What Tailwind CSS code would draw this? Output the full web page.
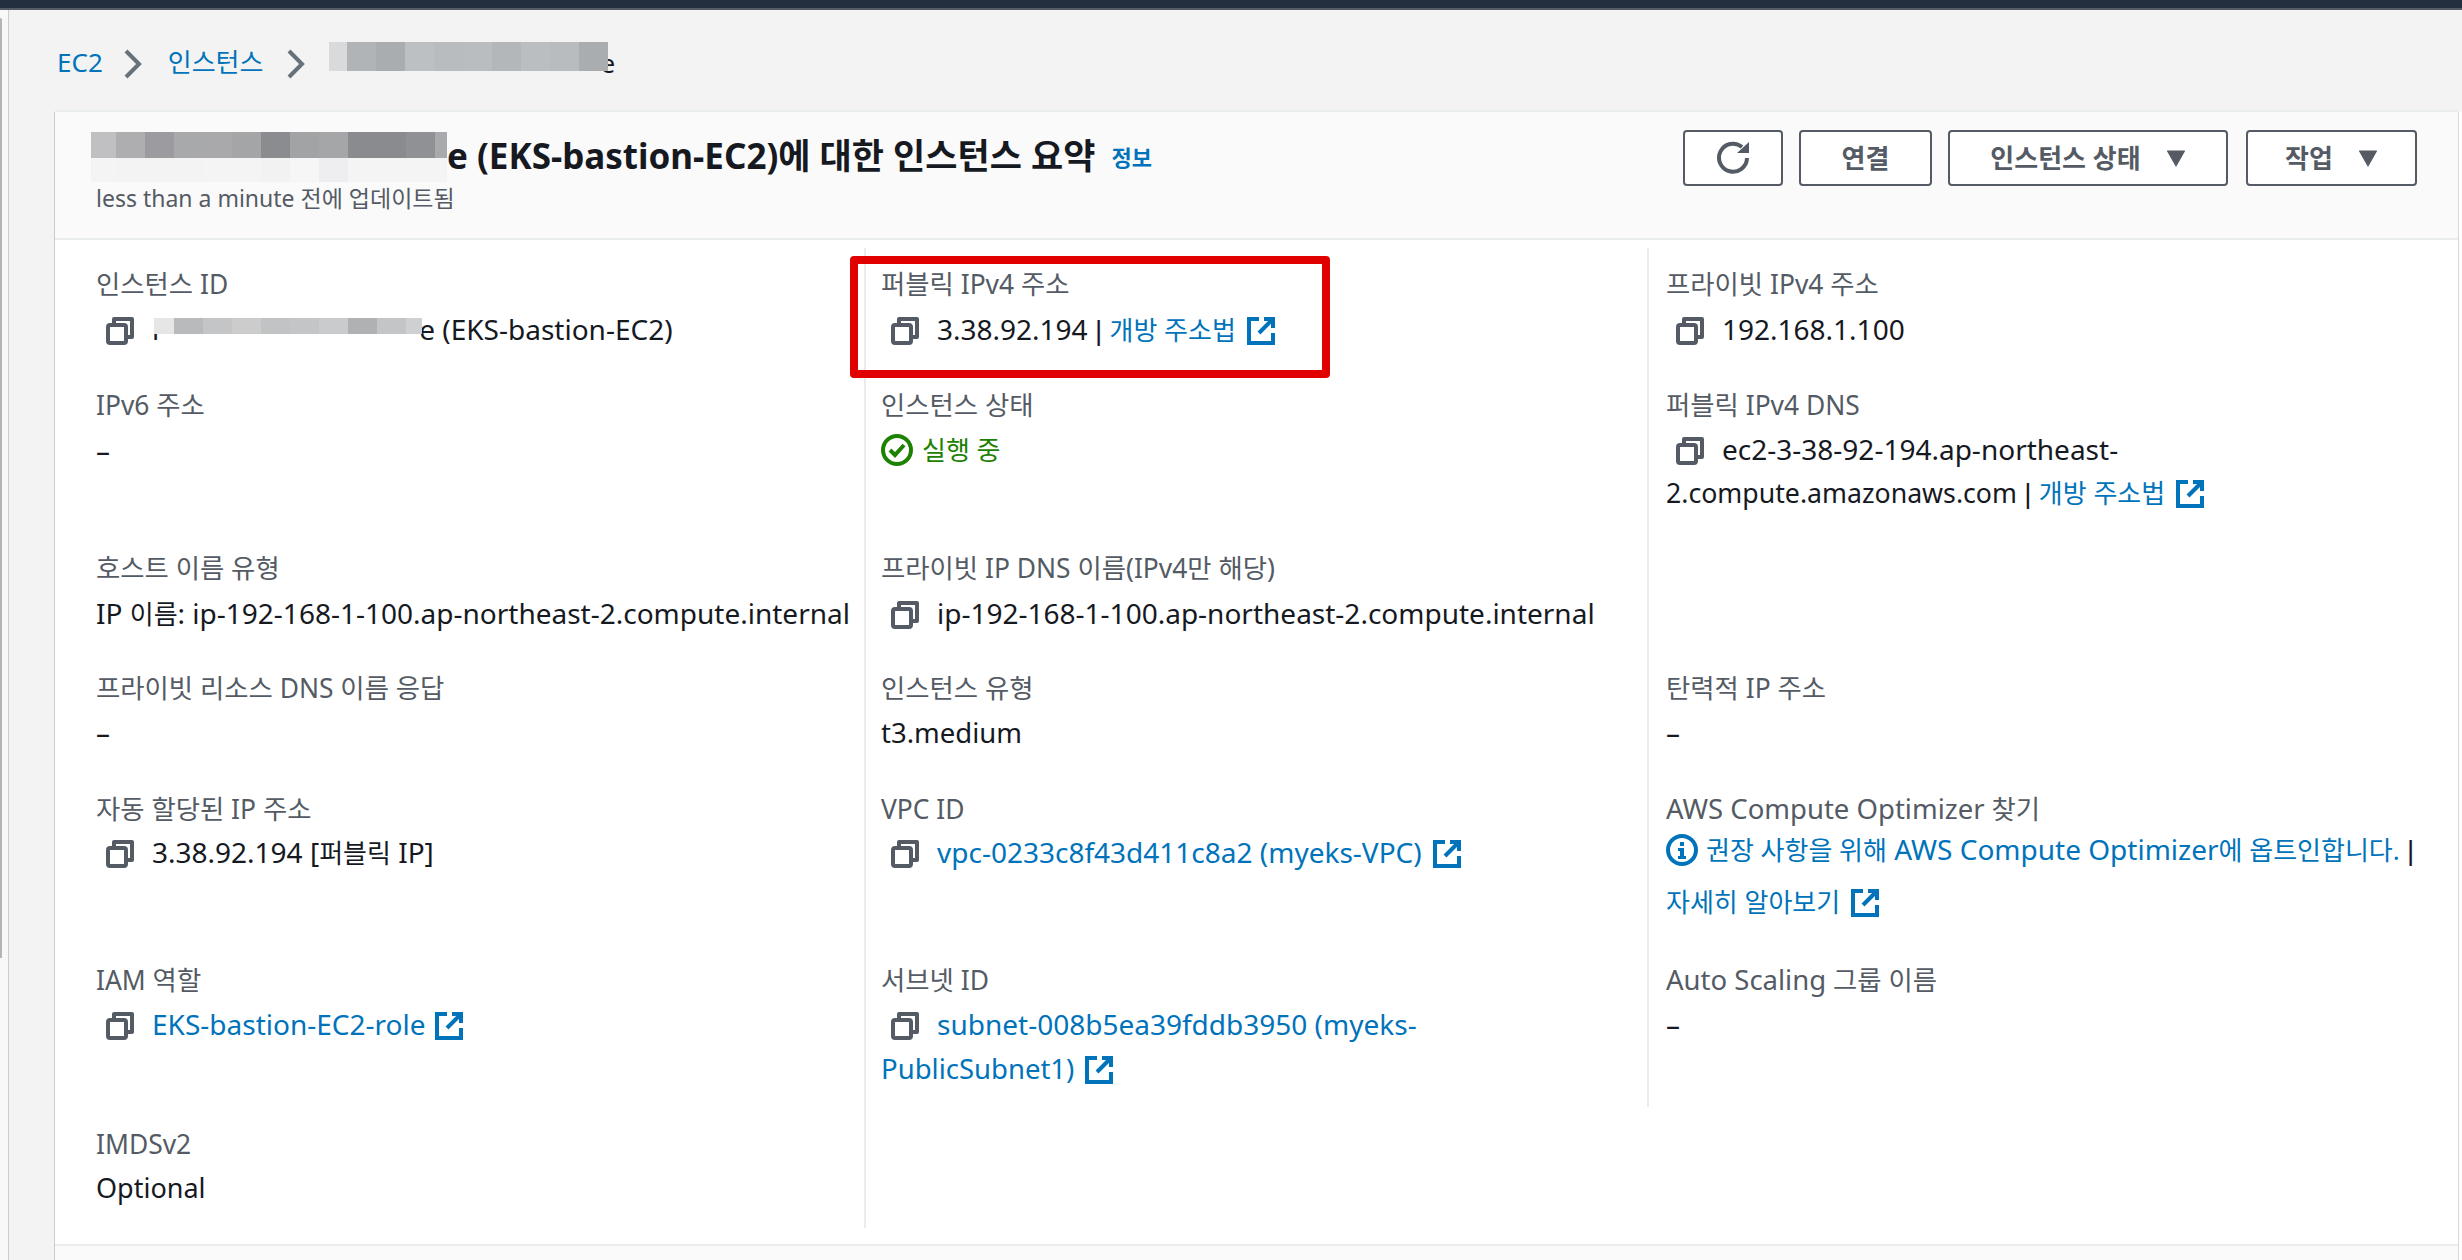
<!DOCTYPE html>
<html lang="ko">
<head>
  <meta charset="UTF-8" />
  <title>인스턴스 요약</title>
  <script src="https://cdn.jsdelivr.net/npm/@tailwindcss/browser@4"></script>
</head>
<body class="h-[1260px] overflow-hidden bg-[#f3f3f3] text-[26px] leading-[44px] text-[#16191f] font-['Noto_Sans','Noto_Sans_CJK_KR',sans-serif]">
  <svg class="hidden">
    <symbol id="copy" viewBox="0 0 28 28"><g fill="none" stroke="#545b64" stroke-width="4" stroke-linejoin="round"><rect x="2" y="8" width="18" height="18" rx="2"/><path d="M8 7V2h18v18h-5"/></g></symbol>
    <symbol id="ext" viewBox="0 0 28 28"><g fill="none" stroke="#0073bb" stroke-width="4"><path d="M12 2H2v24h24V16"/><path d="M17 2h9v9"/><path d="M25.5 2.500 12 16"/></g></symbol>
  </svg>

  <div class="h-[10px] bg-[#232f3e] border-b-2 border-[#545b64]"></div>
  <div class="flex">
    <div class="relative w-[9px] h-[1250px] bg-[#f8f8f8] border-r border-[#cccccc]">
      <div class="absolute left-0 top-[8px] w-[2px] h-[940px] bg-[#b5b5b5] rounded-tr-sm"></div>
    </div>
    <div class="w-[2449px]">
      <nav class="h-[102px] flex items-start pl-[48px] pt-[30px] text-[#0073bb] text-[26px]">
        <span>EC2</span>
        <svg class="w-[18px] h-[30px] ml-[21px] mr-[26px] mt-[9px]" viewBox="0 0 18 30" fill="none" stroke="#687078" stroke-width="4"><path d="M2 2l13 13L2 28"/></svg>
        <span>인스턴스</span>
        <svg class="w-[18px] h-[30px] ml-[24px] mr-[24px] mt-[9px]" viewBox="0 0 18 30" fill="none" stroke="#687078" stroke-width="4"><path d="M2 2l13 13L2 28"/></svg>
        <span class="relative z-10 flex h-[29px] mt-[2px] w-[279px]">
          <i class="w-[18px] bg-[#d8dadb]"></i><i class="w-[29px] bg-[#b0b4b7]"></i><i class="w-[29px] bg-[#a9adb0]"></i><i class="w-[29px] bg-[#bcc0c2]"></i><i class="w-[29px] bg-[#b8bcbe]"></i><i class="w-[29px] bg-[#b9bdbf]"></i><i class="w-[29px] bg-[#b3b7ba]"></i><i class="w-[29px] bg-[#babec0]"></i><i class="w-[29px] bg-[#b8bcbe]"></i><i class="w-[29px] bg-[#a9adb0]"></i>
        </span>
        <span class="text-[#16191f] -ml-[8px] pt-[1px]">e</span>
      </nav>

      <section class="relative ml-[46px] w-[2403px] bg-white h-[1148px] shadow-[-1px_0_0_#c8cccc,1px_0_0_#d5dbdb,0_-2px_0_#eaeded]">
        <header class="h-[128px] bg-[#fafafa] border-b-2 border-[#eaeded] flex justify-between pl-[36px] pr-[41px]">
          <div>
            <div class="flex items-start h-[70px]">
              <div class="w-[356px] mt-[20px]">
                <div class="flex h-[26px]">
                  <i class="w-[25px] bg-[#c0c0c2]"></i><i class="w-[29px] bg-[#aeaeb0]"></i><i class="w-[29px] bg-[#9c9ca0]"></i><i class="w-[29px] bg-[#a8a9ab]"></i><i class="w-[29px] bg-[#a9a9ab]"></i><i class="w-[29px] bg-[#a4a5a7]"></i><i class="w-[29px] bg-[#8b8c90]"></i><i class="w-[29px] bg-[#a2a3a5]"></i><i class="w-[29px] bg-[#a5a6a8]"></i><i class="w-[58px] bg-[#8a8b8f]"></i><i class="w-[29px] bg-[#909195]"></i><i class="w-[12px] bg-[#a9aaac]"></i>
                </div>
                <div class="flex h-[24px]">
                  <i class="w-[25px] bg-[#f4f4f5]"></i><i class="w-[87px] bg-[#f3f3f4]"></i><i class="w-[58px] bg-[#f4f4f5]"></i><i class="w-[29px] bg-[#f2f2f3]"></i><i class="w-[29px] bg-[#f6f6f7]"></i><i class="w-[29px] bg-[#eeeef0]"></i><i class="w-[99px] bg-[#f4f4f5]"></i>
                </div>
              </div>
              <h1 class="font-bold text-[35px] leading-[48px] mt-[20px] whitespace-nowrap">e (EKS-bastion-EC2)에 대한 인스턴스 요약</h1>
              <span class="font-bold ml-[16px] mt-[23px] text-[22px] text-[#0073bb]">정보</span>
            </div>
            <p class="ml-[5px] text-[23px] leading-[32px] text-[#545b64]">less than a minute 전에 업데이트됨</p>
          </div>
          <div class="flex h-[56px] mt-[18px] font-bold text-[26px] text-[#545b64]">
            <button class="w-[100px] border-2 border-[#545b64] rounded-[4px] bg-white flex items-center justify-center">
              <svg class="w-[36px] h-[36px]" viewBox="0 0 36 36" fill="none"><path d="M32 18a14 14 0 1 1-5-11" stroke="#545b64" stroke-width="4"/><path d="M34 2v11H22z" fill="#545b64"/></svg>
            </button>
            <button class="w-[133px] ml-[16px] border-2 border-[#545b64] rounded-[4px] bg-white">연결</button>
            <button class="w-[280px] ml-[16px] border-2 border-[#545b64] rounded-[4px] bg-white flex items-center justify-center gap-[25px]">인스턴스 상태 <svg class="w-[20px] h-[17px]" viewBox="0 0 18 16"><path d="M1 1h16L9 15z" fill="#545b64" stroke="#545b64" stroke-linejoin="round"/></svg></button>
            <button class="w-[171px] ml-[18px] border-2 border-[#545b64] rounded-[4px] bg-white flex items-center justify-center gap-[25px]">작업 <svg class="w-[20px] h-[17px]" viewBox="0 0 18 16"><path d="M1 1h16L9 15z" fill="#545b64" stroke="#545b64" stroke-linejoin="round"/></svg></button>
          </div>
        </header>

        <div class="mt-[8px] grid grid-cols-[809px_783px_1fr] grid-rows-[135px_163px_120px_121px_171px_165px_105px] text-[28px]">
          <!-- row 1 -->
          <div class="pl-[41px] pt-[14px]">
            <div class="text-[26.4px] text-[#545b64]">인스턴스 ID</div>
            <div class="mt-[1px] relative"><svg class="inline-block w-[28px] h-[28px] align-[-5px] ml-[10px] mr-[18px]"><use href="#copy"/></svg><span class="relative">i<span class="absolute left-[2px] top-[8px] flex h-[16px]"><i class="w-[20px] bg-[#e6e6e7]"></i><i class="w-[29px] bg-[#b9babb]"></i><i class="w-[29px] bg-[#c4c5c6]"></i><i class="w-[29px] bg-[#cccccd]"></i><i class="w-[29px] bg-[#c2c3c4]"></i><i class="w-[29px] bg-[#c4c5c6]"></i><i class="w-[29px] bg-[#cacbcc]"></i><i class="w-[29px] bg-[#b0b1b2]"></i><i class="w-[29px] bg-[#c4c5c6]"></i><i class="w-[16px] bg-[#cfd0d1]"></i></span></span><span class="ml-[260px]">e (EKS-bastion-EC2)</span></div>
          </div>
          <div class="border-l-2 border-[#eaeded] pl-[15px] pt-[14px]">
            <div class="text-[26.4px] text-[#545b64]">퍼블릭 IPv4 주소</div>
            <div class="mt-[1px]"><svg class="inline-block w-[28px] h-[28px] align-[-5px] ml-[10px] mr-[18px]"><use href="#copy"/></svg>3.38.92.194 <span class="font-['Liberation_Sans']">|</span> <span class="text-[#0073bb] text-[26px]">개방 주소법</span><svg class="inline-block w-[28px] h-[28px] align-[-5px] ml-[11px]"><use href="#ext"/></svg></div>
          </div>
          <div class="border-l-2 border-[#eaeded] pl-[17px] pt-[14px]">
            <div class="text-[26.4px] text-[#545b64]">프라이빗 IPv4 주소</div>
            <div class="mt-[1px]"><svg class="inline-block w-[28px] h-[28px] align-[-5px] ml-[10px] mr-[18px]"><use href="#copy"/></svg>192.168.1.100</div>
          </div>

          <!-- row 2 -->
          <div class="pl-[41px]">
            <div class="text-[26.4px] text-[#545b64]">IPv6 주소</div>
            <div class="mt-[1px]">–</div>
          </div>
          <div class="border-l-2 border-[#eaeded] pl-[15px]">
            <div class="text-[26.4px] text-[#545b64]">인스턴스 상태</div>
            <div class="mt-[1px] flex items-center gap-[9px] text-[26px] text-[#1d8102]">
              <svg class="w-[32px] h-[32px]" viewBox="0 0 32 32" fill="none" stroke="#1d8102" stroke-width="4"><circle cx="16" cy="16" r="14"/><path d="M9 16l5 5 9-10"/></svg>
              실행 중
            </div>
          </div>
          <div class="border-l-2 border-[#eaeded] pl-[17px]">
            <div class="text-[26.4px] text-[#545b64]">퍼블릭 IPv4 DNS</div>
            <div class="mt-[1px] leading-[43px]"><svg class="inline-block w-[28px] h-[28px] align-[-5px] ml-[10px] mr-[18px]"><use href="#copy"/></svg>ec2-3-38-92-194.ap-northeast-<br><span class="text-[26.7px]">2.compute.amazonaws.com</span> <span class="font-['Liberation_Sans']">|</span> <span class="text-[#0073bb] text-[26px]">개방 주소법</span><svg class="inline-block w-[28px] h-[28px] align-[-5px] ml-[11px]"><use href="#ext"/></svg></div>
          </div>

          <!-- row 3 -->
          <div class="pl-[41px]">
            <div class="text-[26.4px] text-[#545b64]">호스트 이름 유형</div>
            <div class="mt-[1px] whitespace-nowrap">IP <span class="text-[26px]">이름</span>: ip-192-168-1-100.ap-northeast-2.compute.internal</div>
          </div>
          <div class="border-l-2 border-[#eaeded] pl-[15px]">
            <div class="text-[26.4px] text-[#545b64]">프라이빗 IP DNS 이름(IPv4만 해당)</div>
            <div class="mt-[1px]"><svg class="inline-block w-[28px] h-[28px] align-[-5px] ml-[10px] mr-[18px]"><use href="#copy"/></svg>ip-192-168-1-100.ap-northeast-2.compute.internal</div>
          </div>
          <div class="border-l-2 border-[#eaeded]"></div>

          <!-- row 4 -->
          <div class="pl-[41px]">
            <div class="text-[26.4px] text-[#545b64]">프라이빗 리소스 DNS 이름 응답</div>
            <div>–</div>
          </div>
          <div class="border-l-2 border-[#eaeded] pl-[15px]">
            <div class="text-[26.4px] text-[#545b64]">인스턴스 유형</div>
            <div class="mt-[1px] text-[27.5px]">t3.medium</div>
          </div>
          <div class="border-l-2 border-[#eaeded] pl-[17px]">
            <div class="text-[26.4px] text-[#545b64]">탄력적 IP 주소</div>
            <div>–</div>
          </div>

          <!-- row 5 -->
          <div class="pl-[41px]">
            <div class="text-[26.4px] text-[#545b64]">자동 할당된 IP 주소</div>
            <div class="-mt-[1px]"><svg class="inline-block w-[28px] h-[28px] align-[-5px] ml-[10px] mr-[18px]"><use href="#copy"/></svg>3.38.92.194 [<span class="text-[26px]">퍼블릭</span> IP]</div>
          </div>
          <div class="border-l-2 border-[#eaeded] pl-[15px]">
            <div class="text-[26.4px] text-[#545b64]">VPC ID</div>
            <div class="-mt-[1px]"><svg class="inline-block w-[28px] h-[28px] align-[-5px] ml-[10px] mr-[18px]"><use href="#copy"/></svg><span class="text-[#0073bb]">vpc-0233c8f43d411c8a2 (myeks-VPC)</span><svg class="inline-block w-[28px] h-[28px] align-[-5px] ml-[11px]"><use href="#ext"/></svg></div>
          </div>
          <div class="border-l-2 border-[#eaeded] pl-[17px]">
            <div class="text-[26.4px] text-[#545b64]"><span class="text-[27.5px]">AWS Compute Optimizer</span> 찾기</div>
            <div class="-mt-[7px] leading-[51px] whitespace-nowrap text-[#0073bb]">
              <svg class="inline-block w-[32px] h-[32px] align-[-6px] mr-[8px]" viewBox="0 0 32 32" fill="none"><circle cx="16" cy="16" r="14" stroke="#0073bb" stroke-width="4"/><path d="M14 8h4v4h-4zM12 14h6v8h2v3h-8v-3h2v-5h-2z" fill="#0073bb"/></svg><span class="text-[26px]">권장 사항을 위해</span> AWS Compute Optimizer<span class="text-[26px]">에 옵트인합니다.</span> <span class="text-[#16191f] font-['Liberation_Sans']">|</span><br><span class="text-[26px]">자세히 알아보기</span><svg class="inline-block w-[28px] h-[28px] align-[-5px] ml-[11px]"><use href="#ext"/></svg>
            </div>
          </div>

          <!-- row 6 -->
          <div class="pl-[41px]">
            <div class="text-[26.4px] text-[#545b64]">IAM <span>역할</span></div>
            <div><svg class="inline-block w-[28px] h-[28px] align-[-5px] ml-[10px] mr-[18px]"><use href="#copy"/></svg><span class="text-[#0073bb]">EKS-bastion-EC2-role</span><svg class="inline-block w-[28px] h-[28px] align-[-5px] ml-[10px]"><use href="#ext"/></svg></div>
          </div>
          <div class="border-l-2 border-[#eaeded] pl-[15px]">
            <div class="text-[26.4px] text-[#545b64]">서브넷 ID</div>
            <div class="text-[#0073bb]"><svg class="inline-block w-[28px] h-[28px] align-[-5px] ml-[10px] mr-[18px]"><use href="#copy"/></svg>subnet-008b5ea39fddb3950 (myeks-<br><span class="text-[27.5px]">PublicSubnet1)</span><svg class="inline-block w-[28px] h-[28px] align-[-5px] ml-[11px]"><use href="#ext"/></svg></div>
          </div>
          <div class="h-[149px] border-l-2 border-[#eaeded] pl-[17px]">
            <div class="text-[26.4px] text-[#545b64]"><span class="text-[27.5px]">Auto Scaling</span> 그룹 이름</div>
            <div>–</div>
          </div>

          <!-- row 7 -->
          <div class="pl-[41px] -mt-[1px]">
            <div class="text-[26.4px] text-[#545b64]">IMDSv2</div>
            <div class="text-[27px]">Optional</div>
          </div>
          <div class="border-l-2 border-[#eaeded]"></div>
          <div></div>
        </div>

        <!-- footer strip -->
        <div class="absolute left-0 right-0 bottom-0 h-[16px] bg-[#fafafa] border-t-2 border-[#eaeded]"></div>
        <!-- red annotation -->
        <div class="absolute left-[795px] top-[144px] w-[480px] h-[122px] border-8 border-[#e00000] rounded-[4px]"></div>
      </section>
    </div>
    <div class="w-[4px] mt-[102px] bg-white"></div>
  </div>
</body>
</html>
